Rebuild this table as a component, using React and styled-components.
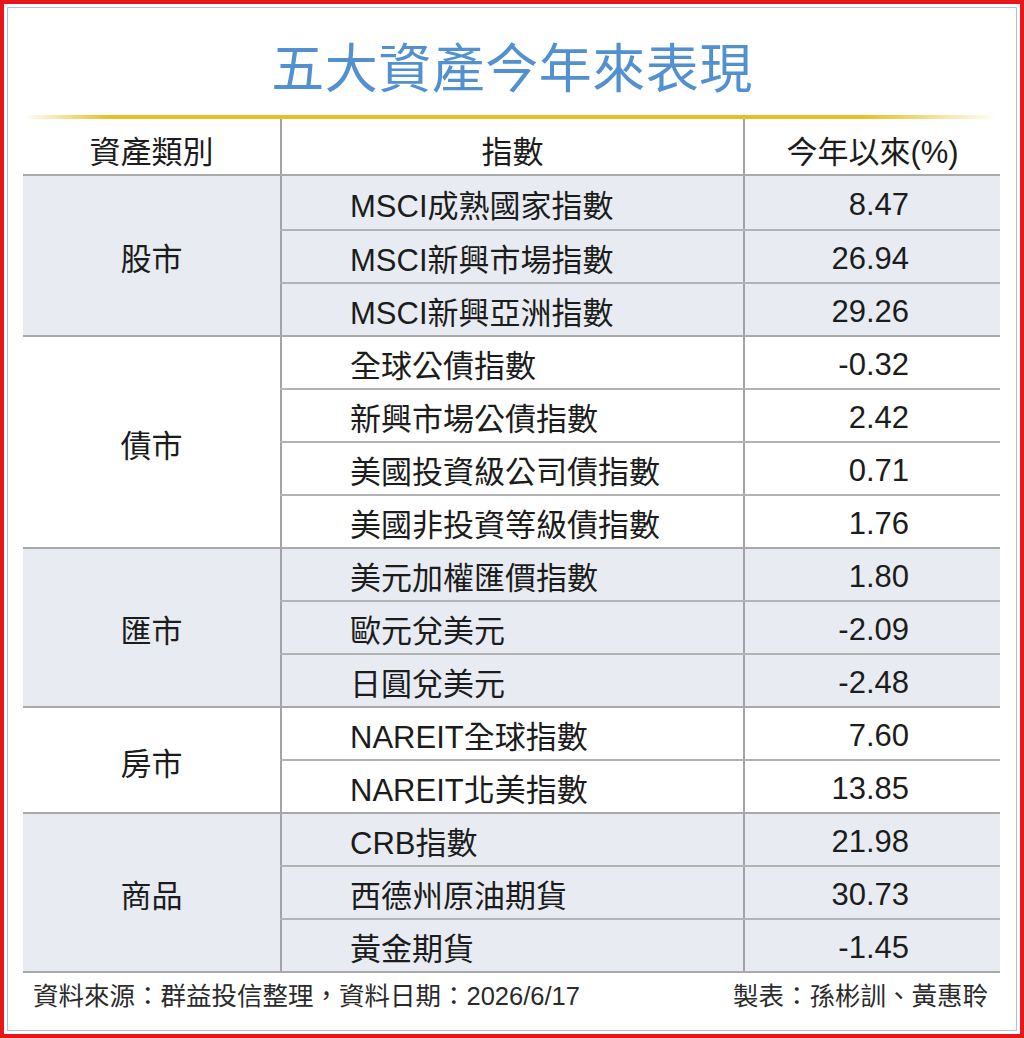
import React from "react";
import styled, { createGlobalStyle } from "styled-components";

const Global = createGlobalStyle`
  html, body { margin: 0; padding: 0; background: #fff; }
  body { font-family: "Liberation Sans", "Noto Sans CJK TC", sans-serif; }
  * { box-sizing: border-box; }
`;

const Frame = styled.div`
  width: 1024px;
  height: 1038px;
  border: 4px solid #e8161b;
  padding: 3px;
  background: #fff;
`;

const Inner = styled.div`
  height: 100%;
  border: 1px solid #a9c2e0;
  display: flex;
  flex-direction: column;
  align-items: stretch;
`;

const Title = styled.h1`
  margin: 35px 0 0;
  height: 53px;
  line-height: 53px;
  text-align: center;
  font-size: 53px;
  font-weight: 400;
  color: #5290d0;
  letter-spacing: 0.5px;
`;

const GoldRule = styled.div`
  margin: 19px 18px 0 15px;
  height: 4px;
  background: linear-gradient(
    to right,
    rgba(230, 190, 30, 0) 0%,
    #e6bf22 9%,
    #e6bf22 86%,
    rgba(230, 190, 30, 0) 100%
  );
`;

const Table = styled.div`
  margin-left: 15px;
  width: 977px;
  display: flex;
  flex-direction: column;
  color: #1c1c1c;
`;

const HeaderRow = styled.div`
  display: grid;
  grid-template-columns: 257px 463px 257px;
  height: 57px;
  border-bottom: 2px solid #a9a9a9;
`;

const HeadCell = styled.div`
  display: flex;
  align-items: center;
  justify-content: center;
  font-size: 31px;
  padding-top: 6px;
  ${(p) => (p.$divider ? "border-left: 2px solid #a3a3a3;" : "")}
`;

const Group = styled.div`
  display: grid;
  grid-template-columns: 257px 720px;
  background: ${(p) => (p.$shaded ? "#e8ecf2" : "#ffffff")};
  border-top: ${(p) => (p.$first ? "none" : "2px solid #a9a9a9")};
`;

const GroupLabel = styled.div`
  display: flex;
  align-items: center;
  justify-content: center;
  font-size: 31px;
  padding-top: 2px;
`;

const Rows = styled.div`
  display: flex;
  flex-direction: column;
`;

const Row = styled.div`
  display: grid;
  grid-template-columns: 463px 257px;
  height: ${(p) => p.$h}px;
  border-top: ${(p) => (p.$lined ? "2px solid #b3b3b3" : "none")};
`;

const NameCell = styled.div`
  border-left: 2px solid #a3a3a3;
  display: flex;
  align-items: center;
  padding-left: 68px;
  padding-top: 1px;
  font-size: 31px;
  white-space: nowrap;
`;

const ValueCell = styled.div`
  border-left: 2px solid #a3a3a3;
  display: flex;
  align-items: center;
  justify-content: flex-end;
  padding-right: 91px;
  padding-top: 5px;
  font-size: 31px;
`;

const Footer = styled.div`
  margin-left: 15px;
  width: 977px;
  border-top: 2px solid #a9a9a9;
  display: flex;
  align-items: center;
  justify-content: space-between;
  padding: 0 12px 4px 10px;
  height: 46px;
  font-size: 25.5px;
  color: #2b2b2b;
`;

const groups = [
  {
    label: "股市",
    rows: [
      ["MSCI成熟國家指數", "8.47"],
      ["MSCI新興市場指數", "26.94"],
      ["MSCI新興亞洲指數", "29.26"],
    ],
  },
  {
    label: "債市",
    rows: [
      ["全球公債指數", "-0.32"],
      ["新興市場公債指數", "2.42"],
      ["美國投資級公司債指數", "0.71"],
      ["美國非投資等級債指數", "1.76"],
    ],
  },
  {
    label: "匯市",
    rows: [
      ["美元加權匯價指數", "1.80"],
      ["歐元兌美元", "-2.09"],
      ["日圓兌美元", "-2.48"],
    ],
  },
  {
    label: "房市",
    rows: [
      ["NAREIT全球指數", "7.60"],
      ["NAREIT北美指數", "13.85"],
    ],
  },
  {
    label: "商品",
    rows: [
      ["CRB指數", "21.98"],
      ["西德州原油期貨", "30.73"],
      ["黃金期貨", "-1.45"],
    ],
  },
];

export default function App() {
  return (
    <>
      <Global />
      <Frame>
        <Inner>
          <Title>五大資產今年來表現</Title>
          <GoldRule />
          <Table>
            <HeaderRow>
              <HeadCell>資產類別</HeadCell>
              <HeadCell $divider>指數</HeadCell>
              <HeadCell $divider>今年以來(%)</HeadCell>
            </HeaderRow>
            {groups.map((g, gi) => (
              <Group key={g.label} $shaded={gi % 2 === 0} $first={gi === 0}>
                <GroupLabel>{g.label}</GroupLabel>
                <Rows>
                  {g.rows.map(([name, val], ri) => (
                    <Row
                      key={name}
                      $lined={ri > 0}
                      $h={ri === 0 && gi > 0 ? 51 : 53}
                    >
                      <NameCell>{name}</NameCell>
                      <ValueCell>{val}</ValueCell>
                    </Row>
                  ))}
                </Rows>
              </Group>
            ))}
          </Table>
          <Footer>
            <span>資料來源：群益投信整理，資料日期：2026/6/17</span>
            <span>製表：孫彬訓、黃惠聆</span>
          </Footer>
        </Inner>
      </Frame>
    </>
  );
}
